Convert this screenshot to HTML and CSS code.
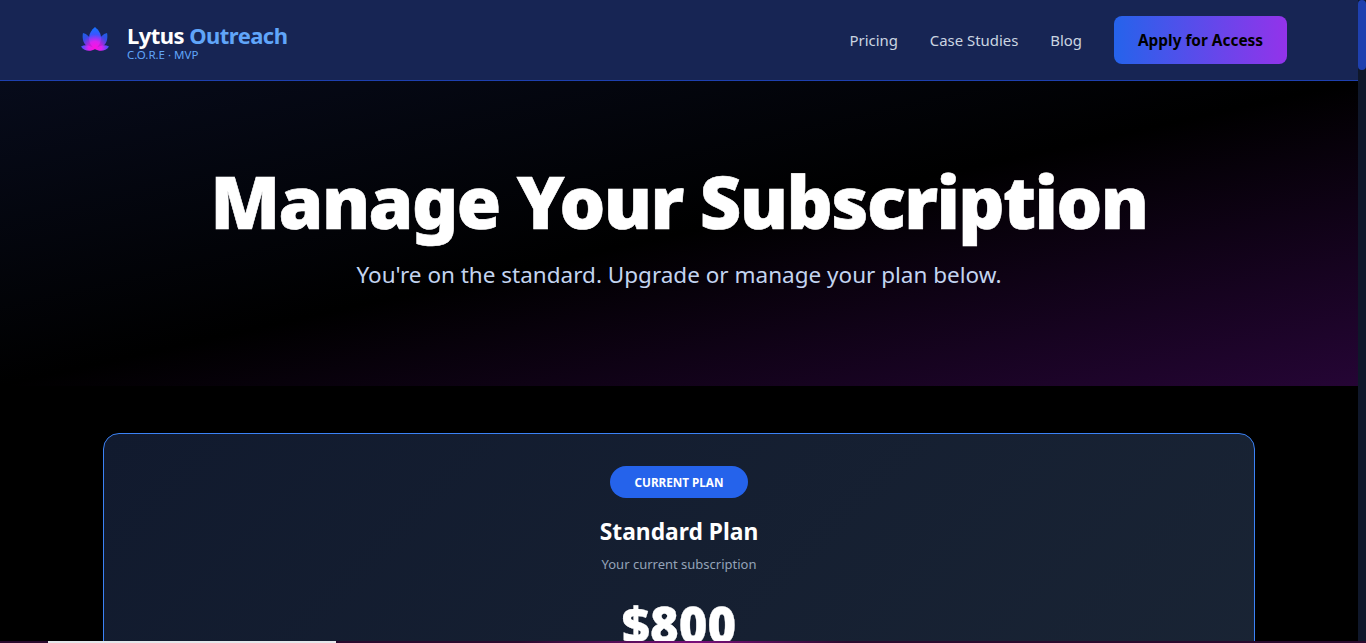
FILE: index.html
```html
<!DOCTYPE html>
<html lang="en">
<head>
<meta charset="utf-8">
<title>Manage Your Subscription</title>
<link rel="stylesheet" href="styles.css">
</head>
<body>
<div class="viewport">
  <div class="page">
    <header class="topbar">
      <a class="brand" href="#">
        <svg class="lotus" viewBox="0 0 28 24" width="28" height="24" aria-hidden="true">
          <defs>
            <radialGradient id="lg" gradientUnits="userSpaceOnUse" cx="14" cy="21" r="19">
              <stop offset="0" stop-color="#ff10e0"/>
              <stop offset="0.35" stop-color="#d822f0"/>
              <stop offset="0.72" stop-color="#3a55ff"/>
              <stop offset="1" stop-color="#1a6dff"/>
            </radialGradient>
          </defs>
          <path fill="url(#lg)" d="M0 19.500C4 17.500 9 18 14 22C10 24.800 3 24.500 0 19.500ZM28 19.500C24 17.500 19 18 14 22C18 24.800 25 24.500 28 19.500Z"/>
          <path fill="url(#lg)" opacity="0.85" d="M2 6C6 7 9 10 11 14L14 22C8 21.500 3 18 2 13C1.500 10 1.500 8 2 6ZM26 6C22 7 19 10 17 14L14 22C20 21.500 25 18 26 13C26.500 10 26.500 8 26 6Z"/>
          <path fill="url(#lg)" d="M14 0C17.500 3 20 6.500 20 11C20 16 17 20 14 22.500C11 20 8 16 8 11C8 6.500 10.500 3 14 0Z"/>
        </svg>
        <span class="brand-text">
          <span class="brand-name">Lytus <span class="brand-accent">Outreach</span></span>
          <span class="brand-sub">C.O.R.E · MVP</span>
        </span>
      </a>
      <nav class="nav">
        <a class="nav-link" href="#">Pricing</a>
        <a class="nav-link" href="#">Case Studies</a>
        <a class="nav-link" href="#">Blog</a>
        <a class="cta" href="#">Apply for Access</a>
      </nav>
    </header>
    <section class="hero">
      <h1 class="hero-title">Manage Your Subscription</h1>
      <p class="hero-sub">You're on the standard. Upgrade or manage your plan below.</p>
    </section>
    <main class="content">
      <article class="plan-card">
        <span class="plan-badge">CURRENT PLAN</span>
        <h2 class="plan-name">Standard Plan</h2>
        <p class="plan-note">Your current subscription</p>
        <div class="plan-price">$800</div>
      </article>
    </main>
  </div>
  <div class="scrollbar"><div class="scroll-thumb"></div></div>
  <div class="bottom-strip"><div class="bottom-thumb"></div></div>
</div>
</body>
</html>
```
FILE: styles.css
```css
* { box-sizing: border-box; }
html, body { margin: 0; height: 100%; overflow: hidden; background: #000; }
body { font-family: "Noto Sans", "Open Sans", sans-serif; color: #fff; }
a { text-decoration: none; color: inherit; }
.viewport { position: relative; display: flex; width: 1366px; height: 643px; overflow: hidden; }
.page { flex: 1 1 auto; min-width: 0; height: 643px; overflow: hidden; background: #000; }
.topbar { display: flex; align-items: center; justify-content: space-between; height: 81px; padding: 0 71px 0 81px; background: #172554; border-bottom: 1px solid #1e40af; }
.brand { display: flex; align-items: center; gap: 18px; }
.lotus { display: block; flex: none; margin-top: -2px; }
.brand-text { display: flex; flex-direction: column; margin-top: 2px; }
.brand-name { font-size: 22px; line-height: 28px; font-weight: 700; letter-spacing: -0.55px; color: #fff; }
.brand-accent { color: #60a5fa; }
.brand-sub { font-size: 11.5px; line-height: 12px; color: #60a5fa; }
.nav { display: flex; align-items: center; gap: 32px; }
.nav-link { font-size: 14.9px; line-height: 24px; color: #cbd5e1; }
.cta { display: block; width: 173px; height: 48px; line-height: 49px; text-align: center; border-radius: 8px; font-size: 15.4px; font-weight: 700; color: #000; background: linear-gradient(90deg, #2563eb, #9333ea); }
.hero { height: 305px; padding-top: 80px; text-align: center; background: linear-gradient(to bottom right, #070b1b 0%, #000 50%, #250535 100%); }
.hero-title { margin: 0; font-size: 72px; line-height: 80px; font-weight: 900; letter-spacing: -1.55px; -webkit-text-stroke: 0.6px #fff; color: #fff; }
.hero-sub { margin: 20px 0 0; font-size: 22.5px; line-height: 28px; color: #c3d4f0; }
.content { padding: 47px 0 0; }
.plan-card { display: flex; flex-direction: column; align-items: center; width: 1152px; height: 400px; margin: 0 auto; padding-top: 32px; border: 1px solid #3b82f6; border-radius: 16px; background: linear-gradient(135deg, #111a2e, #1a2535); }
.plan-badge { display: block; width: 138px; height: 32px; line-height: 33px; text-align: center; border-radius: 16px; background: #2563eb; font-size: 11.7px; font-weight: 700; color: #fff; }
.plan-name { margin: 18px 0 0; font-size: 22.8px; line-height: 32px; font-weight: 700; color: #fff; }
.plan-note { margin: 6px 0 0; font-size: 13px; line-height: 20px; color: #94a3b8; }
.plan-price { margin-top: 22px; font-size: 49px; line-height: 56px; font-weight: 900; -webkit-text-stroke: 0.3px #fff; color: #fff; }
.scrollbar { flex: none; width: 8px; height: 643px; background: #0f172a; }
.scroll-thumb { width: 8px; height: 70px; border-radius: 4px; background: #1e40af; }
.bottom-strip { position: absolute; left: 0; right: 0; bottom: 0; height: 2px; background: linear-gradient(90deg, #2a0a2e 38%, #7a0f7a 51%, #2a0a2e 62%); }
.bottom-thumb { width: 288px; height: 2px; margin-left: 48px; background: #e5e7eb; }
```
